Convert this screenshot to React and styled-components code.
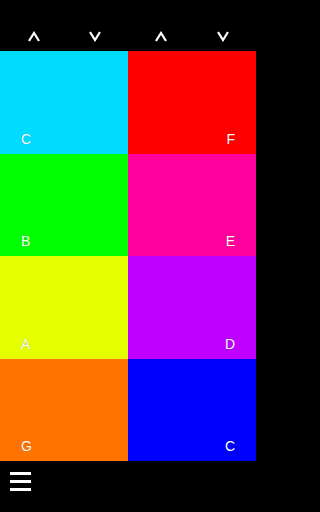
import React from 'react'
import styled, { createGlobalStyle } from 'styled-components';

const GlobalStyle = createGlobalStyle`
  html, body {
    margin: 0;
    padding: 0;
    background: #000;
  }
  body {
    font-family: "Liberation Sans", Arial, sans-serif;
  }
`

const Screen = styled.div`
  width: 256px;
  height: 512px;
  display: flex;
  flex-direction: column;
  background: #000;
  overflow: hidden;
`

const TopBar = styled.div`
  height: 51px;
  display: grid;
  grid-template-columns: repeat(4, 1fr);
  align-items: end;
  padding-bottom: 9px;
  box-sizing: border-box;
`

const ArrowButton = styled.button`
  background: none;
  border: 0;
  padding: 0;
  height: 11px;
  display: flex;
  justify-content: center;
  align-items: center;
  cursor: pointer;
  transform: translateX(${p => p.$shift}px);
`

const Board = styled.div`
  height: 410px;
  display: grid;
  grid-template-columns: 1fr 1fr;
  grid-template-rows: repeat(4, 1fr);
`

const Cell = styled.div`
  background: ${p => p.$color};
  display: flex;
  align-items: flex-end;
  justify-content: ${p => (p.$right ? 'flex-end' : 'flex-start')};
  padding: 0 21px 7px 21px;
  box-sizing: border-box;
`

const Label = styled.span`
  color: #fff;
  font-size: 14px;
  line-height: 16px;
  text-shadow: 0 0 1px rgba(0, 0, 0, 0.35);
`

const BottomBar = styled.div`
  flex: 1;
  display: flex;
  align-items: flex-start;
  padding: 11px 0 0 10px;
`

const MenuButton = styled.button`
  background: none;
  border: 0;
  padding: 0;
  width: 21px;
  display: flex;
  flex-direction: column;
  gap: 5.5px;
  cursor: pointer;
`

const MenuLine = styled.span`
  display: block;
  height: 2.5px;
  background: #fff;
`

function Chevron({ up }) {
  return (
    <svg width="12" height="11" viewBox="0 0 12 11">
      <polyline
        points={up ? '1,10 6,2 11,10' : '1,1 6,9 11,1'}
        fill="none"
        stroke="#fff"
        strokeWidth="2.2"
        strokeLinejoin="miter"
      />
    </svg>
  )
}

const cells = [
  { label: 'C', color: '#00dcff' },
  { label: 'F', color: '#ff0000', right: true },
  { label: 'B', color: '#00ff00' },
  { label: 'E', color: '#ff009c', right: true },
  { label: 'A', color: '#e6ff00' },
  { label: 'D', color: '#bf00ff', right: true },
  { label: 'G', color: '#ff7400' },
  { label: 'C', color: '#0000ff', right: true },
]

export default function App() {
  return (
    <Screen>
      <GlobalStyle />
      <TopBar>
        <ArrowButton $shift={2}><Chevron up /></ArrowButton>
        <ArrowButton $shift={-1}><Chevron /></ArrowButton>
        <ArrowButton $shift={1}><Chevron up /></ArrowButton>
        <ArrowButton $shift={-1}><Chevron /></ArrowButton>
      </TopBar>
      <Board>
        {cells.map((c, i) => (
          <Cell key={i} $color={c.color} $right={c.right}>
            <Label>{c.label}</Label>
          </Cell>
        ))}
      </Board>
      <BottomBar>
        <MenuButton>
          <MenuLine />
          <MenuLine />
          <MenuLine />
        </MenuButton>
      </BottomBar>
    </Screen>
  )
}
